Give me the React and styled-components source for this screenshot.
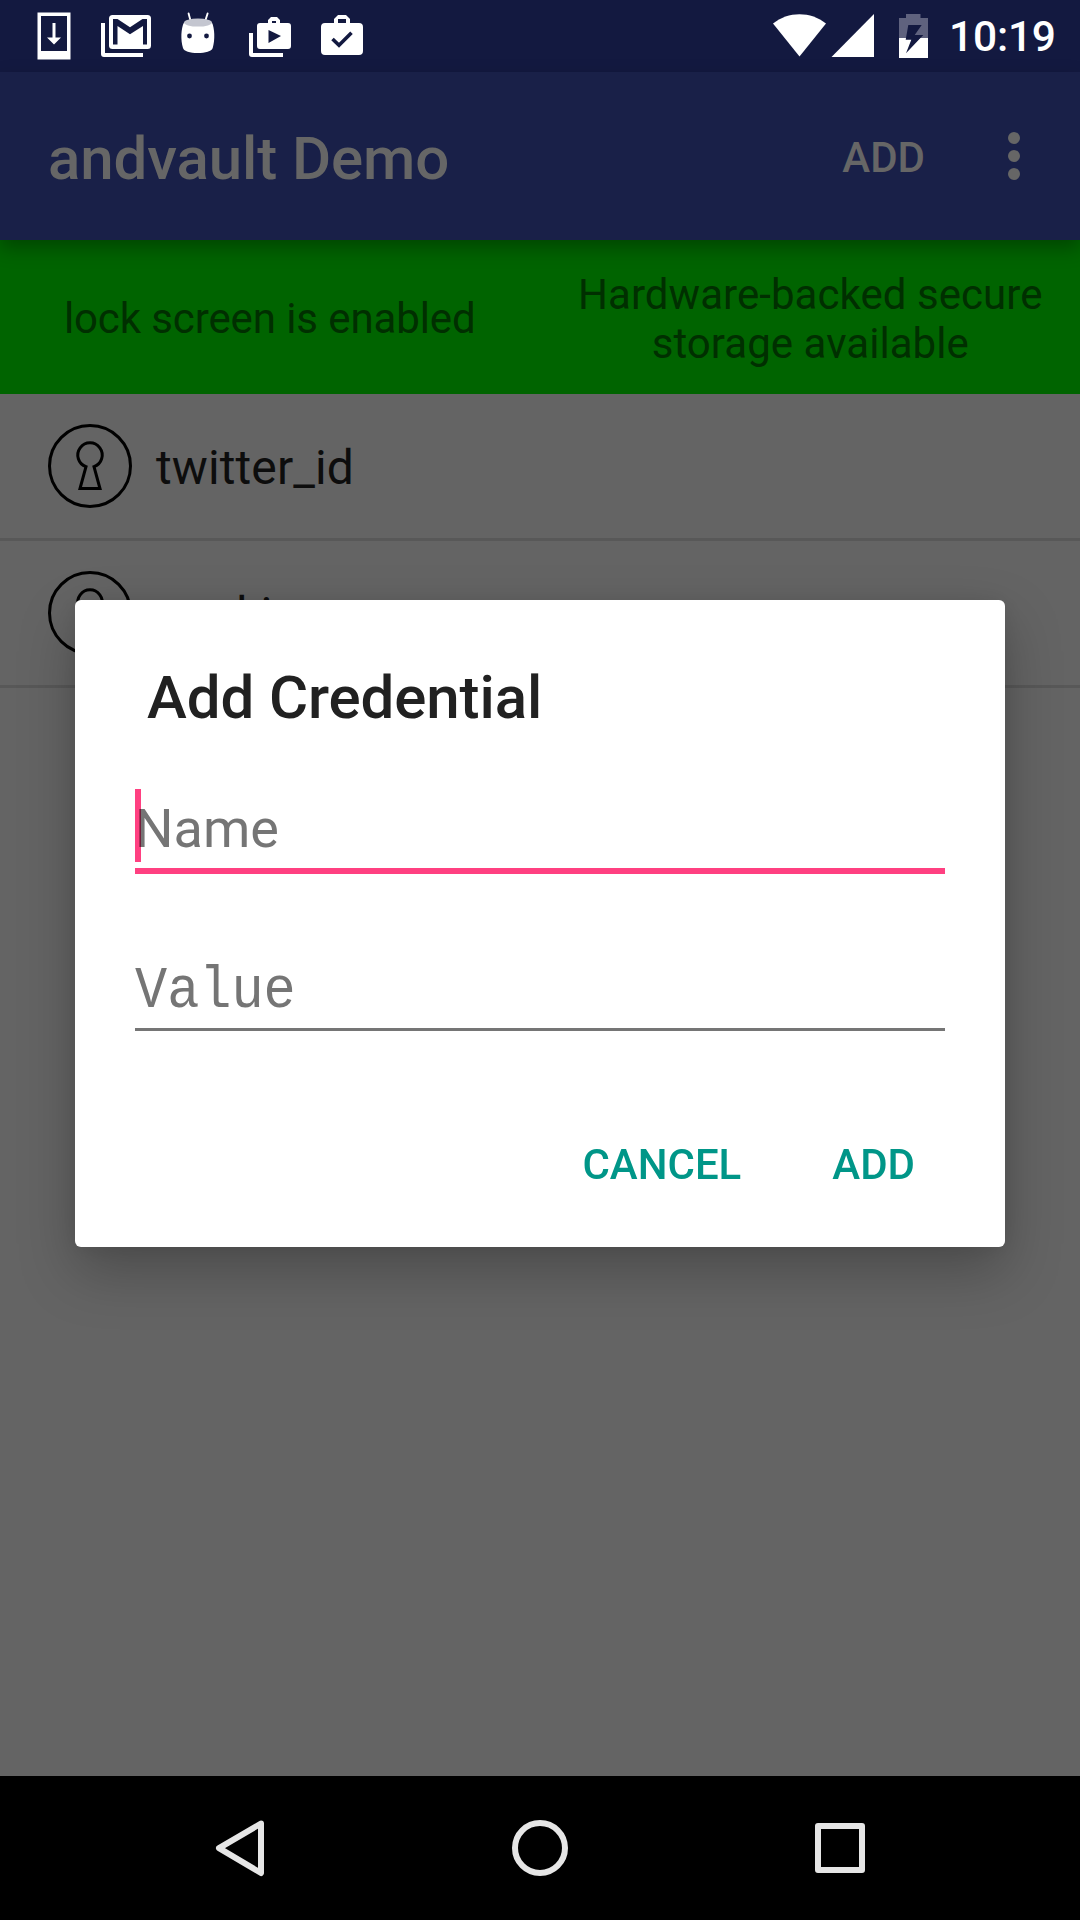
import React from "react";
import styled, { createGlobalStyle } from "styled-components";

const Global = createGlobalStyle`
  * { box-sizing: border-box; }
  html, body { margin: 0; padding: 0; background: #000; }
  body { font-family: Roboto, "Noto Sans", sans-serif; }
`;

const Screen = styled.div`
  position: relative;
  display: flex;
  flex-direction: column;
  width: 1080px;
  height: 1920px;
  overflow: hidden;
  background: #646464;
`;

const StatusBar = styled.header`
  display: flex;
  justify-content: space-between;
  height: 72px;
  flex: none;
  background: #131940;
  color: #fff;
`;

const Notifications = styled.div`
  display: flex;
  align-items: flex-start;
  padding: 12px 0 0 30px;
`;

const Indicators = styled.div`
  display: flex;
  align-items: flex-start;
  padding: 12px 25px 0 0;
`;

const Glyph = styled.svg`
  display: block;
  flex: none;
  width: ${(p) => p.$w}px;
  height: ${(p) => p.$h}px;
  margin-right: ${(p) => p.$mr || 0}px;
`;

const Clock = styled.span`
  width: 106px;
  font-size: 42.5px;
  font-weight: 500;
  letter-spacing: -0.2px;
  line-height: 50px;
  white-space: nowrap;
`;

const Toolbar = styled.div`
  position: relative;
  z-index: 1;
  display: flex;
  align-items: center;
  height: 168px;
  flex: none;
  padding: 0 48px;
  background: #192048;
  color: #666;
  box-shadow: 0 8px 18px rgba(0, 0, 0, 0.3);
`;

const ToolbarTitle = styled.h1`
  flex: 1;
  margin: 6px 0 0;
  font-size: 60px;
  font-weight: 500;
  letter-spacing: -0.1px;
  line-height: 70px;
`;

const ToolbarAction = styled.button`
  border: 0;
  margin: 4px 83px 0 0;
  padding: 0;
  background: none;
  color: inherit;
  font: 500 42px/50px Roboto, sans-serif;
`;

const StatusPanel = styled.section`
  display: flex;
  height: 154px;
  flex: none;
  background: #006400;
`;

const StatusCell = styled.div`
  flex: 1;
  display: flex;
  align-items: center;
  justify-content: center;
  padding: ${(p) => p.$top}px 0 0 ${(p) => p.$left || 0}px;
  color: #002f00;
  font-size: 42px;
  letter-spacing: ${(p) => p.$tracking}px;
  line-height: 49px;
  text-align: center;
`;

const List = styled.ul`
  flex: 1;
  margin: 0;
  padding: 0;
  list-style: none;
`;

const Row = styled.li`
  display: flex;
  align-items: center;
  gap: 24px;
  height: 147px;
  padding: 0 48px;
  border-bottom: 3px solid #585858;
  color: #0d0d0d;
  font-size: 48px;
  letter-spacing: 0.1px;
  line-height: 56px;
`;

const RowLabel = styled.span`
  margin-top: 3px;
`;

const NavBar = styled.nav`
  display: flex;
  justify-content: center;
  align-items: center;
  gap: 240px;
  height: 144px;
  flex: none;
  background: #000;
`;

const Dialog = styled.section`
  position: absolute;
  left: 75px;
  top: 600px;
  z-index: 2;
  display: flex;
  flex-direction: column;
  width: 930px;
  height: 647px;
  padding: 63px 60px 47px;
  border-radius: 6px;
  background: #fff;
  box-shadow: 0 24px 56px rgba(0, 0, 0, 0.25), 0 0 24px rgba(0, 0, 0, 0.08);
`;

const DialogTitle = styled.h2`
  margin: 0 0 0 12px;
  color: #212121;
  font-size: 60px;
  font-weight: 500;
  letter-spacing: -0.1px;
  line-height: 70px;
`;

const Field = styled.div`
  position: relative;
  display: flex;
  align-items: flex-start;
  height: ${(p) => (p.$focused ? 85 : 84)}px;
  margin-top: ${(p) => p.$top}px;
  border-bottom: ${(p) => (p.$focused ? "6px solid #ff4081" : "3px solid #757575")};
`;

const Hint = styled.span`
  color: #757575;
  font-size: 54px;
  line-height: 80px;
`;

const MonoHint = styled(Hint)`
  padding-top: 5px;
  font-family: "Liberation Mono", monospace;
  font-size: 59px;
  transform: scaleX(0.908);
  transform-origin: 0 50%;
`;

const Caret = styled.i`
  position: absolute;
  left: 0;
  top: 0;
  width: 6px;
  height: 73px;
  background: #ff4081;
  mix-blend-mode: multiply;
`;

const Actions = styled.div`
  display: flex;
  justify-content: flex-end;
  gap: 91px;
  margin-top: 109px;
  padding-right: 30px;
`;

const TextButton = styled.button`
  border: 0;
  padding: 0;
  background: none;
  color: #009688;
  font: 500 42px/50px Roboto, sans-serif;
`;

const KeyholeIcon = () => (
  <Glyph $w={84} $h={84} viewBox="0 0 84 84" fill="none" stroke="#000" strokeWidth="3">
    <circle cx="42" cy="42" r="40.5" />
    <path d="M38 42.6A12.2 12.2 0 1 1 46 42.6L52 64.5H32Z" />
  </Glyph>
);

const rows = ["twitter_id", "cookie"];

export default function App() {
  return (
    <>
      <Global />
      <Screen>
        <StatusBar>
          <Notifications>
            <Glyph $w={48} $h={48} $mr={22} viewBox="30 12 48 48">
              <path fill="#fff" fillRule="evenodd" d="M37.5 12.5h33v47h-33zM41 16v35h26V16zM52.5 23h3v14.5H61L54 44.5 47 37.5h5.5z" />
            </Glyph>
            <Glyph $w={52} $h={48} $mr={26} viewBox="100 12 52 48">
              <path fill="#fff" d="M101 23h4v30h38v4h-39a3 3 0 0 1-3-3z" />
              <rect x="109" y="15" width="42" height="34" rx="3.5" fill="#fff" />
              <path fill="#131940" d="M113 19h4.5L130 27.2 142.500 19H147v25.500h-4V26L130 34.200 117.500 26v18.500H113z" />
            </Glyph>
            <Glyph $w={40} $h={48} $mr={24} viewBox="178 12 40 48">
              <path stroke="#fff" strokeWidth="1.9" strokeLinecap="round" d="M188.600 13.500l2 7.500M207.600 13.500l-2.400 7.500" />
              <path fill="#fff" d="M184 22.500C181 28 180.500 40 183 48c1 3.500 7 5 14.700 5s14-1.500 15-5c2.500-8 2-20-.8-25.500z" />
              <ellipse cx="198" cy="22.6" rx="14" ry="4" fill="#c4c6d0" />
              <circle cx="189.5" cy="36" r="2.4" fill="#131940" />
              <circle cx="206.5" cy="36" r="2.4" fill="#131940" />
            </Glyph>
            <Glyph $w={50} $h={48} $mr={24} viewBox="242 12 50 48">
              <path fill="#fff" d="M249 33h4v20h30v4h-31a3 3 0 0 1-3-3z" />
              <path fill="#fff" fillRule="evenodd" d="M260 23h8v-3l3-3h6l3 3v3h8a3 3 0 0 1 3 3v20a3 3 0 0 1-3 3h-28a3 3 0 0 1-3-3V26a3 3 0 0 1 3-3zM272 21v2h4v-2zM268.500 30v13L281 36z" />
            </Glyph>
            <Glyph $w={48} $h={48} viewBox="316 12 48 48">
              <path fill="#fff" fillRule="evenodd" d="M325 23h9v-4l4-4h8l4 4v4h9a4 4 0 0 1 4 4v24a4 4 0 0 1-4 4h-34a4 4 0 0 1-4-4V27a4 4 0 0 1 4-4zM338 19v4h8v-4z" />
              <path fill="none" stroke="#131940" strokeWidth="3.6" d="M332.500 39l6.500 6.300L351.500 32.800" />
            </Glyph>
          </Notifications>
          <Indicators>
            <Glyph $w={54} $h={48} $mr={4} viewBox="773 12 54 48">
              <path fill="#fff" d="M773 23.500C788 11 811 11 826 23.500L799.500 56.500z" />
            </Glyph>
            <Glyph $w={44} $h={48} $mr={24} viewBox="831 12 44 48">
              <path fill="#fff" d="M831.500 57H874V14z" />
            </Glyph>
            <Glyph $w={30} $h={48} $mr={20} viewBox="899 12 30 48">
              <path fill="#5f627e" d="M899 38V18h7v-4h14.500v4h7.500v20z" />
              <path fill="#fff" d="M899 38h29v20h-29z" />
              <path fill="#131940" d="M908.300 25h13.400l-7 10h8.600L906 53.300l5.300-13.600h-5.600z" />
            </Glyph>
            <Clock>10:19</Clock>
          </Indicators>
        </StatusBar>

        <Toolbar>
          <ToolbarTitle>andvault Demo</ToolbarTitle>
          <ToolbarAction>ADD</ToolbarAction>
          <Glyph $w={12} $h={48} $mr={12} viewBox="0 0 12 48" fill="#666">
            <circle cx="6" cy="6" r="6" />
            <circle cx="6" cy="24" r="6" />
            <circle cx="6" cy="42" r="6" />
          </Glyph>
        </Toolbar>

        <StatusPanel>
          <StatusCell $top={2} $tracking={-0.1}>lock screen is enabled</StatusCell>
          <StatusCell $top={4} $left={1} $tracking={0.05}>
            Hardware-backed secure
            <br />
            storage available
          </StatusCell>
        </StatusPanel>

        <List>
          {rows.map((name) => (
            <Row key={name}>
              <KeyholeIcon />
              <RowLabel>{name}</RowLabel>
            </Row>
          ))}
        </List>

        <NavBar>
          <Glyph $w={60} $h={60} viewBox="210 1818 60 60" fill="none" stroke="#e6e6e6" strokeWidth="6" strokeLinejoin="round">
            <path d="M261 1823.500L219 1848.200 261 1873z" />
          </Glyph>
          <Glyph $w={60} $h={60} viewBox="0 0 60 60" fill="none" stroke="#e6e6e6" strokeWidth="6">
            <circle cx="30" cy="30" r="25" />
          </Glyph>
          <Glyph $w={60} $h={60} viewBox="0 0 60 60" fill="none" stroke="#e6e6e6" strokeWidth="6" strokeLinejoin="round">
            <rect x="8" y="8" width="44" height="44" />
          </Glyph>
        </NavBar>

        <Dialog>
          <DialogTitle>Add Credential</DialogTitle>
          <Field $focused $top={56}>
            <Hint>Name</Hint>
            <Caret />
          </Field>
          <Field $top={73}>
            <MonoHint>Value</MonoHint>
          </Field>
          <Actions>
            <TextButton>CANCEL</TextButton>
            <TextButton>ADD</TextButton>
          </Actions>
        </Dialog>
      </Screen>
    </>
  );
}
